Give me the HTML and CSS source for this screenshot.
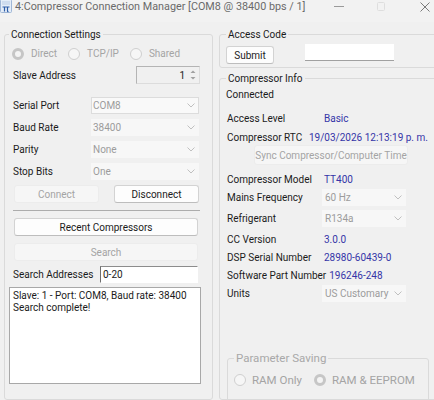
FILE: index.html
```html
<!DOCTYPE html>
<html lang="en">
<head>
  <meta charset="UTF-8">
  <title>4:Compressor Connection Manager</title>
  <link rel="stylesheet" href="styles.css">
</head>
<body>

<div class="titlebar">
  <svg class="app-icon" width="12" height="14" viewBox="0 0 12 14">
    <rect x="0.5" y="0.5" width="11" height="13" rx="1" fill="#e4edf8" stroke="#9fb6d6"/>
    <path d="M2 3 H10 M2 5 H10" stroke="#b9cbe4" stroke-width="1"/>
    <path d="M2.5 8 H9.5 M4.5 8 V12.5 M7.5 8 V12 Q7.5 12.8 8.5 12.5" fill="none" stroke="#2f5ea8" stroke-width="1.2"/>
  </svg>
  <span class="title">4:Compressor Connection Manager [COM8 @ 38400 bps / 1]</span>
  <div class="caption-btns">
    <svg class="cap-min" width="10" height="10" viewBox="0 0 10 10"><path d="M0 6.5 H10" stroke="#9a9a9a"/></svg>
    <svg class="cap-max" width="8" height="9" viewBox="0 0 8 9"><rect x="0.5" y="0.5" width="7" height="8" rx="1" fill="none" stroke="#dedede"/></svg>
    <svg class="cap-close" width="10" height="10" viewBox="0 0 10 10"><path d="M0.5 0.5 L9.5 9.5 M9.5 0.5 L0.5 9.5" stroke="#7a7a7a"/></svg>
  </div>
</div>

<div class="client">

  <fieldset class="group conn">
    <legend>Connection Settings</legend>

    <div class="radio-row">
      <span class="radio checked disabled"><span class="dot"></span>Direct</span>
      <span class="radio disabled"><span class="dot"></span>TCP/IP</span>
      <span class="radio disabled"><span class="dot"></span>Shared</span>
    </div>

    <div class="row slave-row">
      <span class="lbl">Slave Address</span>
      <div class="spinner">
        <span class="spin-val">1</span>
        <svg width="8" height="16" viewBox="0 0 8 16">
          <path d="M1.5 6 L4 3.5 L6.5 6 Z" fill="#a0a0a0"/>
          <path d="M1.5 10 L4 12.5 L6.5 10 Z" fill="#a0a0a0"/>
        </svg>
      </div>
    </div>

    <div class="row combo-row first">
      <span class="lbl">Serial Port</span>
      <div class="combo boxed"><span>COM8</span><svg width="8" height="5" viewBox="0 0 8 5"><path d="M0.5 0.5 L4 4 L7.5 0.5" fill="none" stroke="#c0c0c0"/></svg></div>
    </div>
    <div class="row combo-row">
      <span class="lbl">Baud Rate</span>
      <div class="combo"><span>38400</span><svg width="8" height="5" viewBox="0 0 8 5"><path d="M0.5 0.5 L4 4 L7.5 0.5" fill="none" stroke="#c0c0c0"/></svg></div>
    </div>
    <div class="row combo-row">
      <span class="lbl">Parity</span>
      <div class="combo"><span>None</span><svg width="8" height="5" viewBox="0 0 8 5"><path d="M0.5 0.5 L4 4 L7.5 0.5" fill="none" stroke="#c0c0c0"/></svg></div>
    </div>
    <div class="row combo-row">
      <span class="lbl">Stop Bits</span>
      <div class="combo"><span>One</span><svg width="8" height="5" viewBox="0 0 8 5"><path d="M0.5 0.5 L4 4 L7.5 0.5" fill="none" stroke="#c0c0c0"/></svg></div>
    </div>

    <div class="btn-row">
      <button class="btn disabled">Connect</button>
      <button class="btn">Disconnect</button>
    </div>

    <div class="separator"></div>

    <button class="btn wide recent">Recent Compressors</button>
    <button class="btn wide disabled search">Search</button>

    <div class="row search-row">
      <span class="lbl">Search Addresses</span>
      <div class="textbox">0-20</div>
    </div>

    <div class="log">Slave: 1 - Port: COM8, Baud rate: 38400<br>Search complete!</div>
  </fieldset>

  <div class="right-col">

    <fieldset class="group access">
      <legend>Access Code</legend>
      <div class="access-row">
        <button class="btn submit">Submit</button>
        <div class="code-input"></div>
      </div>
    </fieldset>

    <fieldset class="group info">
      <legend>Compressor Info</legend>

      <div class="irow connected"><span>Connected</span></div>
      <div class="irow level"><span class="k">Access Level</span><span class="v">Basic</span></div>
      <div class="irow rtc"><span class="k">Compressor RTC</span><span class="v">19/03/2026 12:13:19 p. m.</span></div>
      <button class="btn disabled sync">Sync Compressor/Computer Time</button>
      <div class="irow model"><span class="k">Compressor Model</span><span class="v">TT400</span></div>
      <div class="irow crow mains">
        <span class="k">Mains Frequency</span>
        <div class="combo"><span>60 Hz</span><svg width="8" height="5" viewBox="0 0 8 5"><path d="M0.5 0.5 L4 4 L7.5 0.5" fill="none" stroke="#c0c0c0"/></svg></div>
      </div>
      <div class="irow crow refr">
        <span class="k">Refrigerant</span>
        <div class="combo"><span>R134a</span><svg width="8" height="5" viewBox="0 0 8 5"><path d="M0.5 0.5 L4 4 L7.5 0.5" fill="none" stroke="#c0c0c0"/></svg></div>
      </div>
      <div class="irow cc"><span class="k">CC Version</span><span class="v">3.0.0</span></div>
      <div class="irow dsp"><span class="k">DSP Serial Number</span><span class="v">28980-60439-0</span></div>
      <div class="irow sw"><span class="k">Software Part Number</span><span class="v">196246-248</span></div>
      <div class="irow crow units">
        <span class="k">Units</span>
        <div class="combo"><span>US Customary</span><svg width="8" height="5" viewBox="0 0 8 5"><path d="M0.5 0.5 L4 4 L7.5 0.5" fill="none" stroke="#c0c0c0"/></svg></div>
      </div>

      <fieldset class="group saving">
        <legend>Parameter Saving</legend>
        <div class="radio-row big">
          <span class="radio disabled"><span class="dot"></span>RAM Only</span>
          <span class="radio checked disabled"><span class="dot"></span>RAM &amp; EEPROM</span>
        </div>
      </fieldset>
    </fieldset>

  </div>
</div>

</body>
</html>
```

FILE: styles.css
```css
* {
  box-sizing: border-box;
}

body {
  margin: 0;
  width: 434px;
  height: 400px;
  overflow: hidden;
  background: #f0f0f0;
  font-family: Roboto, "Liberation Sans", sans-serif;
  font-size: 10px;
  color: #1b1b1b;
}

/* Title bar */
.titlebar {
  display: flex;
  align-items: flex-start;
  height: 22px;
  background: #f2f2f2;
}

.app-icon {
  margin-top: -1px;
  flex-shrink: 0;
}

.title {
  margin-left: 3px;
  font-size: 10.8px;
  line-height: 13px;
  color: #6a6a6a;
  white-space: nowrap;
}

.caption-btns {
  display: flex;
  align-items: flex-start;
  margin-left: auto;
  padding-right: 4px;
}

.cap-min {
  margin-right: 33px;
}

.cap-max {
  margin-top: 2px;
  margin-right: 35px;
}

.cap-close {
  margin-top: 2px;
}

/* Client area */
.client {
  display: flex;
  gap: 6px;
  padding: 6px 0 0 4px;
}

.group {
  margin: 0;
  padding: 0 4px;
  border: 1px solid #dadada;
  border-radius: 3px;
  min-width: 0;
}

.group legend {
  padding: 0 2px;
  line-height: 13px;
  font-size: 10px;
  color: #1b1b1b;
}

.conn {
  width: 209px;
  height: 372px;
  flex-shrink: 0;
  padding: 0 11px 0 4px;
}

.row {
  display: flex;
  align-items: center;
}

.lbl {
  padding-left: 4px;
  white-space: nowrap;
}

/* Radios */
.radio-row {
  display: flex;
  align-items: center;
  height: 25px;
  padding-left: 3px;
  white-space: nowrap;
}

.radio {
  display: flex;
  align-items: center;
  flex-shrink: 0;
  gap: 7px;
  margin-right: 11px;
}

.radio.disabled {
  color: #a4a4a4;
}

.dot {
  width: 12px;
  height: 12px;
  border-radius: 50%;
  border: 1px solid #cfcfcf;
  background: #f6f6f6;
}

.radio.checked .dot {
  border: 3.5px solid #c6c6c6;
  background: #f4f4f4;
}

/* Spinner */
.slave-row {
  height: 18px;
}

.spinner {
  display: flex;
  align-items: center;
  margin-left: auto;
  margin-right: 1px;
  width: 64px;
  height: 18px;
  border: 1px solid #b4b4b4;
  border-right-color: #dcdcdc;
  border-bottom-color: #dcdcdc;
  padding-right: 2px;
}

.spin-val {
  flex: 1;
  text-align: right;
  padding-right: 4px;
}

/* Combos */
.combo-row {
  height: 17px;
  margin-top: 5px;
}

.combo-row.first {
  margin-top: 13px;
}

.combo-row .lbl {
  width: 82px;
}

.combo {
  display: flex;
  align-items: center;
  justify-content: space-between;
  width: 108px;
  height: 17px;
  padding: 0 4px 0 2px;
  background: #f7f7f7;
  color: #9c9c9c;
}

.combo.boxed {
  background: #f9f9f9;
  border: 1px solid #dcdcdc;
  padding-left: 1px;
  padding-right: 3px;
}

/* Buttons */
.btn {
  display: block;
  height: 18px;
  padding: 0;
  font-family: inherit;
  font-size: 10px;
  color: #1b1b1b;
  background: #fdfdfd;
  border: 1px solid #d3d3d3;
  border-bottom-color: #bdbdbd;
  border-radius: 3px;
}

.btn.disabled {
  color: #a4a4a4;
  background: #f6f6f6;
  border-color: #ececec;
}

.btn-row {
  display: flex;
  justify-content: space-between;
  margin-top: 5px;
  padding: 0 2px 0 5px;
}

.btn-row .btn {
  width: 85px;
}

.separator {
  margin: 7px 1px 0 4px;
  height: 1px;
  background: #acacac;
}

.btn.wide {
  width: 184px;
  margin-left: 5px;
  margin-top: 7px;
}

/* Search */
.search-row {
  height: 17px;
  margin-top: 5px;
}

.search-row .lbl {
  width: 91px;
}

.textbox {
  width: 98px;
  height: 17px;
  line-height: 15px;
  padding-left: 2px;
  background: #fff;
  border: 1px solid #fff;
  border-top-color: #8c8c8c;
  border-left-color: #6e6e6e;
}

.log {
  margin-top: 4px;
  height: 97px;
  padding: 2px 3px;
  line-height: 12px;
  background: #fff;
  border: 1px solid #a8a8a8;
  white-space: nowrap;
}

/* Right column */
.right-col {
  width: 220px;
  flex-shrink: 0;
}

.access {
  padding: 0 6px 3px;
}

.access-row {
  display: flex;
  align-items: flex-start;
  margin-top: 5px;
  height: 18px;
}

.submit {
  width: 48px;
}

.code-input {
  width: 89px;
  height: 17px;
  margin: -2px 0 0 31px;
  background: #fff;
  border-bottom: 1px solid #a0a0a0;
}

.info {
  margin-top: 4px;
  height: 328px;
  padding: 0 6px;
}

.irow {
  display: flex;
  align-items: center;
  height: 16px;
  white-space: nowrap;
}

.irow .k {
  min-width: 98px;
  padding-left: 1px;
}

.irow .v {
  color: #3535a8;
}

.connected { margin-top: 1px; }
.level { margin-top: 8px; }
.rtc { margin-top: 3px; }

.rtc .k {
  min-width: 83px;
}

.sync {
  width: 154px;
  height: 20px;
  margin-left: 28px;
}

.model { margin-top: 6px; }

.crow {
  height: 17px;
}

.crow .combo {
  width: 84px;
  margin-left: -2px;
  padding-left: 3px;
}

.mains { margin-top: 2px; }
.refr { margin-top: 4px; }
.cc { margin-top: 4px; }
.dsp { margin-top: 2px; }
.sw { margin-top: 2px; }
.units { margin-top: 2px; }

.sw .k {
  min-width: 0;
  margin-right: 3px;
}

.saving {
  width: 202px;
  height: 50px;
  margin: 50px 0 0 1px;
  padding: 0 6px;
}

.saving legend {
  font-size: 11.5px;
  color: #a8a8a8;
}

.radio-row.big {
  margin-top: 7px;
  height: 16px;
  padding-left: 0;
  font-size: 11.5px;
}

.radio-row.big .radio {
  gap: 6px;
  margin-right: 12px;
}
```
